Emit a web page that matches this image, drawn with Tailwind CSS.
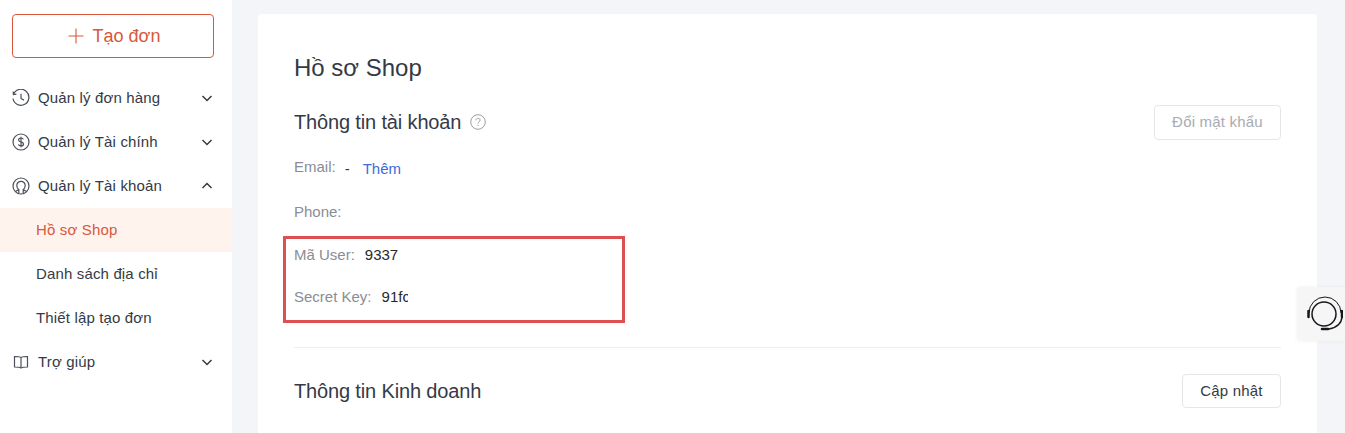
<!DOCTYPE html>
<html lang="vi">
<head>
  <meta charset="UTF-8" />
  <title>Hồ sơ Shop</title>
  <script src="https://cdn.jsdelivr.net/npm/@tailwindcss/browser@4"></script>
</head>
<body class="h-[433px] overflow-hidden bg-[#f3f5f9] font-['Liberation_Sans',Arial,sans-serif] text-[#343a45]">
  <div class="flex h-[433px] overflow-hidden">
    <!-- sidebar -->
    <aside class="w-[232px] h-full shrink-0 bg-white pt-[14px]">
      <button class="mx-3 flex h-[44px] w-[202px] items-center justify-center gap-[9px] rounded border border-[#d9573a] pl-[2px] text-[18px] text-[#d9573a]">
        <svg class="w-4 h-4" viewBox="0 0 16 16" fill="none" stroke="currentColor" stroke-width="1.1"><path d="M8 .5v15M.5 8h15" /></svg>
        Tạo đơn
      </button>
      <nav class="mt-[18px] text-[15px] tracking-[0.15px]">
        <a class="flex h-[44px] items-center pl-3 pr-[19px]">
          <svg class="w-[18px] h-[18px] mr-2 text-[#4a4f59]" viewBox="0 0 18 18" fill="none" stroke="currentColor" stroke-width="1.2"><path d="M1.4 5.5A8 8 0 1 1 1 9.5M1.2 2.5l.2 3 3-.3M9 4.8V9.5l3 1.6" /></svg>
          <span class="flex-1">Quản lý đơn hàng</span>
          <svg class="w-3 h-3" viewBox="0 0 12 12" fill="none" stroke="currentColor" stroke-width="1.5"><path d="M1.5 4l4.5 4.5L10.5 4" /></svg>
        </a>
        <a class="flex h-[44px] items-center pl-3 pr-[19px]">
          <svg class="w-[18px] h-[18px] mr-2 text-[#4a4f59]" viewBox="0 0 18 18" fill="none" stroke="currentColor" stroke-width="1.2"><circle cx="9" cy="9" r="8" /><path d="M11.4 6.4C11 5.3 10 5 9 5c-1.300 0-2.400.7-2.400 1.900 0 2.600 4.900 1.400 4.900 4.100C11.500 12.300 10.300 13 9 13c-1.200 0-2.300-.5-2.600-1.600M9 3.800v10.400" /></svg>
          <span class="flex-1">Quản lý Tài chính</span>
          <svg class="w-3 h-3" viewBox="0 0 12 12" fill="none" stroke="currentColor" stroke-width="1.5"><path d="M1.5 4l4.5 4.5L10.5 4" /></svg>
        </a>
        <a class="flex h-[44px] items-center pl-3 pr-[19px]">
          <svg class="w-[18px] h-[18px] mr-2 text-[#4a4f59]" viewBox="0 0 18 18" fill="none" stroke="currentColor" stroke-width="1.2"><circle cx="9" cy="9" r="8" /><path d="M6.800 16v-3.500C5.300 11.600 4.800 10 4.800 8.500a4.200 4.200 0 0 1 8.400 0c0 1.500-.5 3.100-2 4V16M3.500 14.500l3.300-2M14.500 14.500l-3.300-2" /></svg>
          <span class="flex-1">Quản lý Tài khoản</span>
          <svg class="w-3 h-3" viewBox="0 0 12 12" fill="none" stroke="currentColor" stroke-width="1.5"><path d="M1.500 8L6 3.500 10.500 8" /></svg>
        </a>
        <a class="flex h-[44px] items-center bg-[#fff3ee] pl-9 text-[#d9573a]">Hồ sơ Shop</a>
        <a class="flex h-[44px] items-center pl-9">Danh sách địa chỉ</a>
        <a class="flex h-[44px] items-center pl-9">Thiết lập tạo đơn</a>
        <a class="flex h-[44px] items-center pl-3 pr-[19px]">
          <svg class="w-[18px] h-[18px] mr-2 text-[#4a4f59]" viewBox="0 0 18 18" fill="none" stroke="currentColor" stroke-width="1.2"><path d="M9 4.500C8 3.700 6.500 3.500 2.500 3.500v10.500c4 0 5.500.2 6.500 1 1-.8 2.500-1 6.500-1V3.500c-4 0-5.500.2-6.500 1zM9 4.500V15" /></svg>
          <span class="flex-1">Trợ giúp</span>
          <svg class="w-3 h-3" viewBox="0 0 12 12" fill="none" stroke="currentColor" stroke-width="1.5"><path d="M1.500 4l4.500 4.500L10.500 4" /></svg>
        </a>
      </nav>
    </aside>

    <!-- main card -->
    <main class="ml-[26px] mt-[14px] h-[600px] w-[1059px] shrink-0 rounded bg-white px-9 pt-[40px]">
      <h1 class="text-[24px] leading-[28px]">Hồ sơ Shop</h1>

      <div class="mt-[23px] flex h-[34px] items-center justify-between">
        <div class="flex items-center gap-[9px]">
          <h2 class="text-[20px] tracking-[-0.15px]">Thông tin tài khoản</h2>
          <svg class="w-4 h-4 text-[#9a9da3]" viewBox="0 0 16 16" fill="none" stroke="currentColor" stroke-width="1"><circle cx="8" cy="8" r="7.300" /><path d="M5.900 6.300C5.900 5 6.900 4.300 8 4.300s2.100.7 2.100 1.900C10.100 7.700 8 7.800 8 9.500M8 11v1" /></svg>
        </div>
        <button class="h-[35px] w-[127px] rounded border border-[#e4e6ea] text-[15px] tracking-[0.2px] text-[#a8abb1]">Đổi mật khẩu</button>
      </div>

      <dl class="text-[15px]">
        <div class="mt-[18px] flex h-[22px] items-center">
          <dt class="-mt-[2px] text-[#8a8d95]">Email:</dt>
          <dd class="ml-[9px] mt-[2px] w-[9px]">-</dd>
          <a class="ml-[9px] mt-[2px] text-[#3f6ad8]">Thêm</a>
        </div>
        <div class="mt-[22px] flex h-[22px] items-center"><dt class="text-[#8a8d95]">Phone:</dt></div>
        <div class="mt-[21px] flex h-[22px] items-center">
          <dt class="text-[#8a8d95]">Mã User:</dt>
          <dd class="ml-[10px] text-[#26292f]">9337</dd>
        </div>
        <div class="mt-[20px] flex h-[22px] items-center">
          <dt class="text-[#8a8d95]">Secret Key:</dt>
          <dd class="ml-[10px] w-[26px] overflow-hidden text-[#26292f]">91fc</dd>
        </div>
      </dl>

      <hr class="mt-[39px] border-[#eceef1]" />

      <div class="mt-[26px] flex h-[34px] items-center justify-between">
        <h2 class="text-[20px] tracking-[-0.15px]">Thông tin Kinh doanh</h2>
        <button class="h-[34px] w-[99px] rounded border border-[#e4e6ea] text-[15px] tracking-[0.2px]">Cập nhật</button>
      </div>

      <div class="mt-[22px] text-[15px] text-[#8a8d95]">Mã số thuế:</div>
    </main>
  </div>

  <!-- red annotation box drawn over the screenshot -->
  <div class="absolute left-[283px] top-[236px] h-[87px] w-[342px] border-[3px] border-[#e04f4f]"></div>

  <!-- floating support button -->
  <div class="absolute left-[1297px] top-[287px] flex h-[54px] w-[48px] items-center justify-center rounded-l bg-[#f6f6f7] pl-2 shadow-[0_0_4px_rgba(0,0,0,0.06)]">
    <svg class="w-9 h-9 shrink-0" viewBox="0 0 36 36" fill="none" stroke="#16181c" stroke-width="1.500">
      <circle cx="17" cy="18" r="12" />
      <path d="M2 17A15.800 15.800 0 0 1 34 17" stroke-width="1" />
      <path d="M1.500 15v6M35 15v6" stroke-width="2.500" stroke-linecap="round" />
      <path d="M35 21C34.500 27 30 31.500 22 33" stroke-width="1.500" />
      <path d="M15 33h6" stroke-width="2.500" stroke-linecap="round" />
    </svg>
  </div>
</body>
</html>
